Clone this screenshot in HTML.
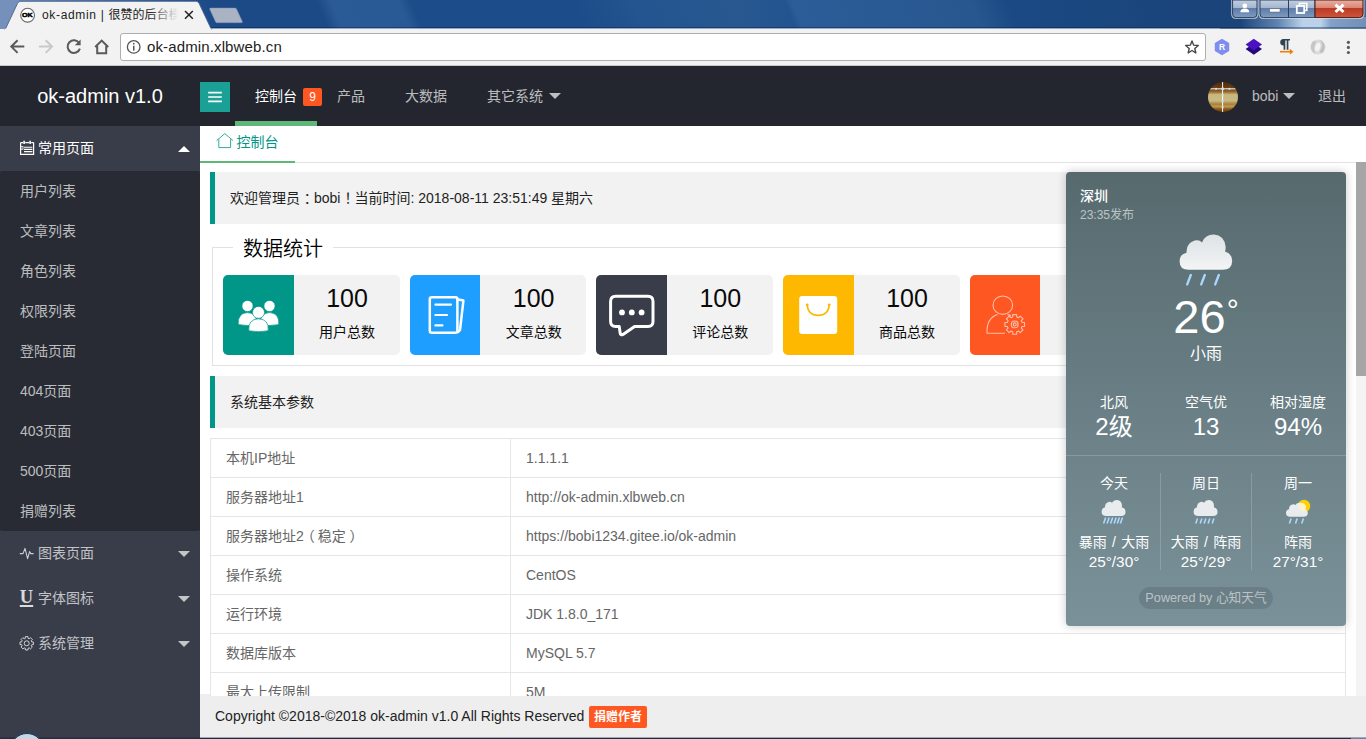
<!DOCTYPE html>
<html lang="zh-CN">
<head>
<meta charset="utf-8">
<title>ok-admin | 很赞的后台模版</title>
<style>
*{box-sizing:border-box;margin:0;padding:0}
html,body{width:1366px;height:739px;overflow:hidden;background:#fff}
body{position:relative;font:14px/1.4 "Liberation Sans","Noto Sans CJK SC",sans-serif;color:#333}
.abs{position:absolute}
/* ---------- browser chrome ---------- */
#titlebar{left:0;top:0;width:1366px;height:29px;background:
 linear-gradient(180deg,rgba(10,30,70,0) 0,rgba(10,30,70,0) 26.5px,rgba(10,30,70,.45) 27.5px,rgba(242,242,242,.55) 28.2px,rgba(242,242,242,.55) 29px),
 linear-gradient(67deg,#7590ba 5.7px,#1b4a87 202.7px,#1b4a87 302.1px,#2b5b96 315.0px,#2a5a95 377.5px,#1c4d8a 388.6px,#1c4c89 535.0px,#245590 594.8px,#28588f 686.8px,#245490 732.9px,#2c5d98 739.3px,#28578f 903.2px,#1b4983 937.2px,#1a447a 1110.3px,#1a447a 1263.1px)}
#toolbar{left:0;top:29px;width:1366px;height:37px;background:#f2f2f2;border-bottom:1px solid #c6c6c6}
#tab{left:6px;top:1px;width:208px;height:28px}
#tabtitle{left:42px;top:7px;width:136px;height:17px;font:12px/17px "Liberation Sans","Noto Sans CJK SC",sans-serif;color:#222;white-space:nowrap;overflow:hidden;letter-spacing:.06px}
#tabfade{left:150px;top:5px;width:28px;height:20px;background:linear-gradient(90deg,rgba(242,242,242,0),#f2f2f2)}
#urlbox{left:120px;top:33px;width:1086px;height:28px;background:#fff;border:1px solid #aeaeae;border-radius:3px}
#url{left:147px;top:37px;font:15px/20px "Liberation Sans",sans-serif;color:#222;white-space:nowrap;letter-spacing:.13px}
/* ---------- page ---------- */
#header{left:0;top:66px;width:1366px;height:60px;background:#23262E}
#logo{left:0;top:66px;width:200px;height:60px;line-height:60px;text-align:center;color:#fff;font-size:20px}
.nav{top:66px;height:60px;line-height:60px;color:rgba(255,255,255,.7);font-size:14px;white-space:nowrap}
.tri{width:0;height:0;border:6px solid transparent}
#side{left:0;top:126px;width:200px;height:613px;background:#393D49}
#sub{left:0;top:171px;width:200px;height:360px;background:#282B33;border-radius:2px}
.sitem{left:20px;height:40px;line-height:40px;color:rgba(255,255,255,.7);font-size:14px;white-space:nowrap}
.pitem{left:38px;height:45px;line-height:45px;color:rgba(255,255,255,.7);font-size:14px;white-space:nowrap}
.quote{left:210px;width:1136px;height:52px;background:#f2f2f2;border-left:5px solid #009688;border-radius:0 2px 2px 0;padding-left:15px;line-height:52px;font-size:14px;color:#222;white-space:nowrap}
.card{top:275px;width:176.67px;height:80px;background:#f2f2f2;border-radius:5px;overflow:hidden}
.card .ic{position:absolute;left:0;top:0;width:70.67px;height:80px}
.card .num{position:absolute;left:71px;top:8px;width:106px;text-align:center;font-size:25px;line-height:30px;color:#0a0a0a}
.card .lab{position:absolute;left:71px;top:47px;width:106px;text-align:center;font-size:14px;line-height:20px;color:#0a0a0a}
.row{left:210px;width:1136px;height:39px;border:1px solid #e6e6e6;border-bottom:none;color:#666;font-size:14px;line-height:38px;white-space:nowrap}
.row .c1{position:absolute;left:0;top:0;width:300px;height:38px;border-right:1px solid #e6e6e6;padding-left:15px}
.row .c2{position:absolute;left:300px;top:0;padding-left:15px}
#footer{left:200px;top:696px;width:1166px;height:43px;background:#eee;line-height:40px;padding-left:15px;font-size:14px;color:#222;white-space:nowrap}
/* weather */
#wx{left:1066px;top:172px;width:280px;height:454px;border-radius:4px;background:linear-gradient(180deg,#566a6e 0,#687d83 46%,#7b9199 100%);box-shadow:0 0 10px rgba(0,0,0,.22);color:#fff}
.wc{position:absolute;text-align:center;white-space:nowrap;transform:translateX(-50%)}
</style>
</head>
<body>
<!-- ======= BROWSER CHROME ======= -->
<div id="titlebar" class="abs"></div>
<div id="toolbar" class="abs"></div>
<svg class="abs" style="left:0;top:0" width="260" height="30" viewBox="0 0 260 30">
  <rect x="0" y="0" width="19" height="29" fill="#7590ba"/>
  <path d="M4.5 31 L17.6 3.2 Q18.6 1.3 20.8 1.3 L195.8 1.3 Q198 1.3 199 3.2 L212.1 31 Z" fill="#f2f2f2" stroke="#4a6590" stroke-width=".9"/>
  <rect x="5" y="28.6" width="206.5" height="2.4" fill="#f2f2f2"/>
  <path d="M210.6 8.1 L235 8.1 Q236 8.1 236.5 9 L242.3 21.6 Q242.7 22.7 241.6 22.7 L217 22.7 Q216 22.7 215.5 21.8 L209.8 9.2 Q209.4 8.1 210.6 8.1Z" fill="#a9b3c3" stroke="#8696b3" stroke-width=".5"/>
  <!-- favicon -->
  <circle cx="27.6" cy="15.2" r="6.9" fill="#fff" stroke="#666" stroke-width="1.1"/>
  <text x="23" y="17.2" transform="translate(27.4 0) scale(1.22 1) translate(-23 0)" font-family="Liberation Sans, sans-serif" font-size="5.9" font-weight="bold" text-anchor="middle" fill="#000" stroke="#000" stroke-width=".45">OK</text>
  <!-- close x -->
  <path d="M185 11 L192.8 18.8 M192.8 11 L185 18.8" stroke="#222" stroke-width="1.5" fill="none"/>
</svg>
<div id="tabtitle" class="abs"><span style="letter-spacing:.66px">ok-admin | </span>很赞的后台模版</div>
<div id="tabfade" class="abs"></div>
<div id="urlbox" class="abs"></div>
<div id="url" class="abs">ok-admin.xlbweb.cn</div>
<svg class="abs" style="left:0;top:29px" width="1366" height="37" viewBox="0 29 1366 37">
  <!-- back -->
  <path d="M24.3 46.6 L11.6 46.6 M17.6 40.3 L11.3 46.6 L17.6 52.9" stroke="#5a5a5a" stroke-width="2" fill="none"/>
  <!-- forward (disabled) -->
  <path d="M39 46.6 L51.7 46.6 M45.7 40.3 L52 46.6 L45.7 52.9" stroke="#c9c9c9" stroke-width="2" fill="none"/>
  <!-- reload -->
  <path d="M79.2 43.2 A6.3 6.3 0 1 0 79.9 48.6" stroke="#5a5a5a" stroke-width="2" fill="none"/>
  <path d="M80.6 39.4 L80.6 45.2 L74.8 45.2 Z" fill="#5a5a5a"/>
  <!-- home -->
  <path d="M95.2 47 L101.7 40.6 L108.2 47 M97.2 46 L97.2 53.2 L106.2 53.2 L106.2 46" stroke="#5a5a5a" stroke-width="2" fill="none" stroke-linejoin="miter"/>
  <!-- info -->
  <circle cx="133.7" cy="46.9" r="6.3" fill="none" stroke="#555" stroke-width="1.3"/>
  <rect x="133" y="45.8" width="1.5" height="4.8" fill="#555"/><rect x="133" y="42.9" width="1.5" height="1.6" fill="#555"/>
  <!-- star -->
  <path transform="translate(1192 47.3) scale(.9) translate(-1192 -47.3)" d="M1192 40.2 L1193.9 44.9 L1199 45.3 L1195.1 48.6 L1196.3 53.6 L1192 50.9 L1187.7 53.6 L1188.9 48.6 L1185 45.3 L1190.1 44.9 Z" fill="none" stroke="#444" stroke-width="1.5" stroke-linejoin="round"/>
  <!-- ext R hex -->
  <path d="M1222 38.8 L1229.2 42.9 L1229.2 51.1 L1222 55.2 L1214.8 51.1 L1214.8 42.9 Z" fill="#7f8cf0"/>
  <text x="1222" y="50.2" font-family="Liberation Sans, sans-serif" font-size="8.5" font-weight="bold" text-anchor="middle" fill="#fff">R</text>
  <!-- layers -->
  <path d="M1253.8 43.4 L1262 49 L1253.8 54.8 L1245.6 49 Z" fill="#23087a"/>
  <path d="M1253.8 38.8 L1262 44.6 L1253.8 50.5 L1245.6 44.6 Z" fill="#4a12c0"/>
  <!-- pilcrow -->
  <path d="M1283.4 38.9 H1290 V40.4 H1288.4 V49.7 H1286.7 V40.4 H1285.3 V49.7 H1283.6 V45.5 A3.3 3.3 0 0 1 1283.4 38.9 Z" fill="#2f4452"/>
  <path d="M1280 51.7 L1290.4 51.7" stroke="#f57c00" stroke-width="1.6" fill="none"/><path d="M1289.8 48.7 L1293.4 51.7 L1289.8 54.8 Z" fill="#f57c00"/>
  <!-- grey swirl ext -->
  <defs><filter id="bl" x="-20%" y="-20%" width="140%" height="140%"><feGaussianBlur stdDeviation=".7"/></filter></defs>
  <g filter="url(#bl)">
    <ellipse cx="1318" cy="47" rx="7.6" ry="7.4" fill="#dadada"/>
    <path d="M1320 39.4 Q1327 44 1323.6 51.6 Q1321.6 54.4 1319.6 51.4 Q1324 45.6 1320 39.4Z" fill="#c0c0c0"/>
    <path d="M1315.6 54.6 Q1308.6 50 1312 42.4 Q1314 39.6 1316.4 42.6 Q1312 48.4 1315.6 54.6Z" fill="#c6c6c6"/>
    <ellipse cx="1317.8" cy="47" rx="2.5" ry="4.3" transform="rotate(14 1317.8 47)" fill="#f3f3f3"/>
  </g>
  <!-- menu dots -->
  <circle cx="1348.4" cy="42.3" r="1.6" fill="#5a5a5a"/><circle cx="1348.4" cy="47.4" r="1.6" fill="#5a5a5a"/><circle cx="1348.4" cy="52.5" r="1.6" fill="#5a5a5a"/>
</svg>
<svg class="abs" style="left:1220px;top:0" width="146" height="29" viewBox="1220 0 146 29">
  <defs>
    <linearGradient id="gb" x1="0" y1="0" x2="0" y2="1"><stop offset="0" stop-color="#c3cfe0"/><stop offset=".45" stop-color="#a3b5cf"/><stop offset=".46" stop-color="#5d7ba6"/><stop offset="1" stop-color="#7f9bc0"/></linearGradient>
    <linearGradient id="gr" x1="0" y1="0" x2="0" y2="1"><stop offset="0" stop-color="#e9b0a4"/><stop offset=".45" stop-color="#d98573"/><stop offset=".46" stop-color="#b83a23"/><stop offset="1" stop-color="#d0553a"/></linearGradient>
    <linearGradient id="glow" x1="0" y1="0" x2="1" y2="0"><stop offset="0" stop-color="#9fc0e6" stop-opacity="0"/><stop offset=".3" stop-color="#a9c6e8" stop-opacity=".45"/><stop offset=".5" stop-color="#cfe3f8" stop-opacity="1"/><stop offset=".64" stop-color="#cfe3f8" stop-opacity="1"/><stop offset=".72" stop-color="#a9c3e2" stop-opacity=".75"/><stop offset="1" stop-color="#9db6d6" stop-opacity=".65"/></linearGradient>
  </defs>
  <rect x="1240" y="0" width="126" height="29" fill="url(#glow)" opacity=".45"/>
  <rect x="1240" y="17" width="126" height="12" fill="url(#glow)" opacity=".8"/>
  <rect x="1220" y="27.4" width="146" height="1.2" fill="#17355f" opacity=".75"/>
  <g fill="none" stroke="rgba(255,255,255,.6)" stroke-width="3">
  <path d="M1232.6 -1 L1257 -1 L1257 14 Q1257 17.6 1253.4 17.6 L1236.2 17.6 Q1232.6 17.6 1232.6 14 Z"/>
  <path d="M1260 -1 L1363 -1 L1363 14 Q1363 17.6 1359.4 17.6 L1263.6 17.6 Q1260 17.6 1260 14 Z"/></g>
  <path d="M1232.6 0 L1257 0 L1257 14 Q1257 17.6 1253.4 17.6 L1236.2 17.6 Q1232.6 17.6 1232.6 14 Z" fill="url(#gb)" stroke="#2b3f60" stroke-width="1"/>
  <path d="M1260 0 L1315 0 L1315 17.6 L1263.6 17.6 Q1260 17.6 1260 14 Z" fill="url(#gb)" stroke="#2b3f60" stroke-width="1"/>
  <path d="M1315 0 L1363 0 L1363 14 Q1363 17.6 1359.4 17.6 L1315 17.6 Z" fill="url(#gr)" stroke="#4a1a14" stroke-width="1"/>
  <path d="M1288.5 0 L1288.5 17.6" stroke="#2b3f60" stroke-width="1"/>
  <!-- user -->
  <circle cx="1244.8" cy="5.8" r="2.4" fill="#fff"/><path d="M1240.4 12.2 Q1240.4 8.6 1244.8 8.6 Q1249.2 8.6 1249.2 12.2 Z" fill="#fff"/>
  <!-- min -->
  <rect x="1269.6" y="8.8" width="10.4" height="3.2" fill="#fff" stroke="#5a5f6a" stroke-width=".5"/>
  <!-- max -->
  <rect x="1299.4" y="3.4" width="7.4" height="7" fill="none" stroke="#fff" stroke-width="1.6"/>
  <rect x="1296.8" y="6" width="7.4" height="7" fill="#6f8bb3" stroke="#fff" stroke-width="1.8"/>
  <!-- close -->
  <path d="M1335.5 4.6 L1343.5 12 M1343.5 4.6 L1335.5 12" stroke="#fff" stroke-width="3" fill="none"/>
</svg>

<!-- ======= PAGE ======= -->
<div id="header" class="abs"></div>
<div id="logo" class="abs">ok-admin v1.0</div>
<div class="abs" style="left:200px;top:82px;width:30px;height:30px;background:#1AA094"></div>
<svg class="abs" style="left:200px;top:82px" width="30" height="30" viewBox="0 0 30 30"><path d="M8.2 10.6 H21.8 M8.2 15 H21.8 M8.2 19.4 H21.8" stroke="#fff" stroke-width="1.7" fill="none"/></svg>
<div class="abs" style="left:235px;top:121px;width:82px;height:5px;background:#5FB878"></div>
<div class="abs nav" style="left:255px;color:#fff">控制台</div>
<div class="abs" style="left:303px;top:88px;width:19px;height:18px;background:#FF5722;border-radius:2px;color:#fff;font-size:12px;line-height:18px;text-align:center">9</div>
<div class="abs nav" style="left:337px">产品</div>
<div class="abs nav" style="left:405px">大数据</div>
<div class="abs nav" style="left:487px">其它系统</div>
<div class="abs tri" style="left:549px;top:93px;border-top-color:rgba(255,255,255,.7)"></div>
<!-- avatar -->
<svg class="abs" style="left:1208px;top:82px" width="30" height="30" viewBox="0 0 30 30">
  <defs><clipPath id="av"><circle cx="15" cy="15" r="15"/></clipPath>
  <linearGradient id="avg" x1="0" y1="0" x2="0" y2="1"><stop offset="0" stop-color="#4a2a0e"/><stop offset=".2" stop-color="#6b3c12"/><stop offset=".33" stop-color="#9a6a2a"/><stop offset=".42" stop-color="#c8b87e"/><stop offset=".62" stop-color="#c9ba84"/><stop offset=".74" stop-color="#a8813a"/><stop offset=".82" stop-color="#c19a4c"/><stop offset=".9" stop-color="#8a571a"/><stop offset="1" stop-color="#6a3c10"/></linearGradient></defs>
  <g clip-path="url(#av)"><rect width="30" height="30" fill="url(#avg)"/>
  <path d="M14.6 0 V30 M0 6.8 H30" stroke="#fff" stroke-width="1" opacity=".95"/>
  <circle cx="14.6" cy="6.8" r="1.5" fill="#bfe6f5"/><circle cx="8" cy="6.8" r="1.1" fill="#bfe6f5"/><circle cx="21.4" cy="6.8" r="1.1" fill="#bfe6f5"/><circle cx="14.6" cy="13" r="1.1" fill="#bfe6f5"/><circle cx="14.6" cy="19.2" r="1.1" fill="#bfe6f5"/><circle cx="14.6" cy="25.4" r="1.1" fill="#bfe6f5"/></g>
</svg>
<div class="abs nav" style="left:1252px">bobi</div>
<div class="abs tri" style="left:1283px;top:93px;border-top-color:rgba(255,255,255,.7)"></div>
<div class="abs nav" style="left:1318px">退出</div>
<div id="side" class="abs"></div>
<div id="sub" class="abs"></div>
<div class="abs pitem" style="top:126px;color:#fff">常用页面</div>
<div class="abs tri" style="left:178px;top:140px;border-bottom-color:#fff"></div>
<div class="abs sitem" style="top:171px">用户列表</div>
<div class="abs sitem" style="top:211px">文章列表</div>
<div class="abs sitem" style="top:251px">角色列表</div>
<div class="abs sitem" style="top:291px">权限列表</div>
<div class="abs sitem" style="top:331px">登陆页面</div>
<div class="abs sitem" style="top:371px">404页面</div>
<div class="abs sitem" style="top:411px">403页面</div>
<div class="abs sitem" style="top:451px">500页面</div>
<div class="abs sitem" style="top:491px">捐赠列表</div>
<div class="abs pitem" style="top:531px">图表页面</div>
<div class="abs tri" style="left:178px;top:551px;border-top-color:rgba(255,255,255,.7)"></div>
<div class="abs pitem" style="top:576px">字体图标</div>
<div class="abs tri" style="left:178px;top:596px;border-top-color:rgba(255,255,255,.7)"></div>
<div class="abs pitem" style="top:621px">系统管理</div>
<div class="abs tri" style="left:178px;top:641px;border-top-color:rgba(255,255,255,.7)"></div>
<svg class="abs" style="left:0;top:126px" width="40" height="560" viewBox="0 126 40 560">
  <!-- notebook icon -->
  <g stroke="#fff" fill="none" stroke-width="1.2">
    <path d="M20.6 142.6 V154.4 H33.6 V142.6"/>
    <path d="M20.6 142.6 H23 M25.2 142.6 H29 M31.2 142.6 H33.6"/>
    <path d="M24.1 140.8 V144 M30.1 140.8 V144" stroke-width="1.6"/>
    <path d="M24 147.2 H32.4 M24 149.4 H32.4 M24 151.6 H32.4" stroke-width="1.1"/>
    <rect x="20.8" y="146.6" width="2.2" height="2.6" stroke-width=".8"/>
  </g>
  <!-- pulse icon -->
  <path d="M19.8 553.6 H23 L25 548.4 L27.6 558.6 L29.6 551.6 L30.6 553.6 H33.6" stroke="rgba(255,255,255,.75)" stroke-width="1.1" fill="none" stroke-linejoin="round"/>
  <!-- gear icon -->
  <g stroke="rgba(255,255,255,.75)" fill="none" stroke-width="1">
    <circle cx="26.7" cy="643.3" r="2.5"/>
    <path d="M25.29 638.30 L25.37 636.63 L28.03 636.63 L28.11 638.30 L29.24 638.76 L30.48 637.65 L32.35 639.52 L31.24 640.76 L31.70 641.89 L33.37 641.97 L33.37 644.63 L31.70 644.71 L31.24 645.84 L32.35 647.08 L30.48 648.95 L29.24 647.84 L28.11 648.30 L28.03 649.97 L25.37 649.97 L25.29 648.30 L24.16 647.84 L22.92 648.95 L21.05 647.08 L22.16 645.84 L21.70 644.71 L20.03 644.63 L20.03 641.97 L21.70 641.89 L22.16 640.76 L21.05 639.52 L22.92 637.65 L24.16 638.76Z" stroke-linejoin="round"/>
  </g>
</svg>
<div class="abs" style="left:18.5px;top:587px;width:16px;height:20px;font:bold 18.5px/20px 'Liberation Serif',serif;color:rgba(255,255,255,.82);text-decoration:underline;text-decoration-thickness:1.6px;text-underline-offset:1.5px;text-align:center">U</div>

<!-- tab bar -->
<div class="abs" style="left:200px;top:162px;width:1156px;height:1px;background:#e2e2e2"></div>
<div class="abs" style="left:200px;top:161px;width:95px;height:2px;background:#5FB878"></div>
<svg class="abs" style="left:215px;top:132px" width="20" height="18" viewBox="0 0 20 18"><path d="M1.6 8.6 L9.8 1.6 L18 8.6 M3.8 7.2 V15.6 H15.6 V7.2" stroke="#009688" stroke-width="1" fill="none" stroke-linejoin="round" opacity=".8"/></svg>
<div class="abs" style="left:236.5px;top:132px;height:20px;line-height:20px;font-size:14px;color:#009688;white-space:nowrap">控制台</div>
<!-- scrollbar -->
<div class="abs" style="left:1356px;top:163px;width:10px;height:534px;background:#f4f4f4"></div>
<div class="abs" style="left:1356px;top:162px;width:10px;height:214px;background:#a6a6a6"></div>
<!-- welcome -->
<div class="abs quote" style="top:172px">欢迎管理员<span style="position:relative;left:3.7px">：</span>bobi<span style="position:relative;left:4px">！</span>当前时间: 2018-08-11 23:51:49 星期六</div>
<!-- fieldset -->
<div class="abs" style="left:212px;top:247px;width:1132px;height:119px;border:1px solid #e2e2e2"></div>
<div class="abs" style="left:233px;top:233px;width:100px;height:30px;background:#fff;text-align:center;font-size:20px;line-height:32px;font-weight:350;color:#000;white-space:nowrap">数据统计</div>
<div class="abs card" style="left:223px"><div class="ic" style="background:#009688"><svg width="71" height="80" viewBox="0 0 71 80"><g fill="#fff" stroke="#009688" stroke-width=".7">
<circle cx="24.5" cy="31" r="5.6"/><path d="M15.2 49.6 Q14.4 38.2 24.5 37.6 Q34.6 38.2 33.8 49.6 Q24.5 51.4 15.2 49.6Z"/>
<circle cx="46.5" cy="31" r="5.6"/><path d="M37.2 49.6 Q36.4 38.2 46.5 37.6 Q56.6 38.2 55.8 49.6 Q46.5 51.4 37.2 49.6Z"/>
<circle cx="35.5" cy="37.4" r="6"/><path d="M25.8 55.8 Q24.8 44.2 35.5 43.8 Q46.2 44.2 45.2 55.8 Q35.5 57.6 25.8 55.8Z"/></g></svg></div><div class="num">100</div><div class="lab">用户总数</div></div>
<div class="abs card" style="left:409.67px"><div class="ic" style="background:#1E9FFF"><svg width="71" height="80" viewBox="0 0 71 80"><g stroke="#fff" fill="none" stroke-width="2.5" stroke-linejoin="round" stroke-linecap="round">
<path d="M48.4 24.6 L53.4 25.6 L50 55 L48.2 57"/>
<rect x="19.8" y="22.2" width="27.6" height="35.6" rx="2" fill="#1E9FFF"/>
<path d="M25.4 29.6 H41 M25.4 40 H37 M25.4 50.4 H32.4" stroke-width="2.2"/></g></svg></div><div class="num">100</div><div class="lab">文章总数</div></div>
<div class="abs card" style="left:596.33px"><div class="ic" style="background:#393D49"><svg width="71" height="80" viewBox="0 0 71 80"><path d="M19.6 21.2 H52 Q57 21.2 57 26.2 V46.4 Q57 51.4 52 51.4 H38.6 L27 59.4 Q24.6 60.6 24.2 58.2 L23.2 51.4 H19.6 Q14.6 51.4 14.6 46.4 V26.2 Q14.6 21.2 19.6 21.2Z" stroke="#fff" stroke-width="3" fill="none" stroke-linejoin="round"/>
<circle cx="26" cy="37.4" r="2.9" fill="#fff"/><circle cx="35.8" cy="37.4" r="2.9" fill="#fff"/><circle cx="45.6" cy="37.4" r="2.9" fill="#fff"/></svg></div><div class="num">100</div><div class="lab">评论总数</div></div>
<div class="abs card" style="left:783px"><div class="ic" style="background:#FFB800"><svg width="71" height="80" viewBox="0 0 71 80"><rect x="16.2" y="21" width="38" height="38" rx="3" fill="#fff"/>
<path d="M24.2 30 Q25 40.4 35.2 40.4 Q45.4 40.4 46.2 30" stroke="#FFB800" stroke-width="1.6" fill="none" stroke-linecap="round"/><circle cx="24.2" cy="29.8" r="1.4" fill="#FFB800"/><circle cx="46.2" cy="29.8" r="1.4" fill="#FFB800"/></svg></div><div class="num">100</div><div class="lab">商品总数</div></div>
<div class="abs card" style="left:969.67px"><div class="ic" style="background:#FF5722"><svg width="71" height="80" viewBox="0 0 71 80"><g stroke="#ffc0ad" fill="none" stroke-width="1.1" stroke-linejoin="round">
<ellipse cx="32.8" cy="30.2" rx="9.8" ry="9.2"/><path d="M35 58.2 H17 Q16.4 43.2 27.6 39.6 M37.6 39.4 Q39.6 40 41 40.8"/>
<circle cx="44.7" cy="49.4" r="3.4"/><circle cx="44.7" cy="49.4" r="1.5"/>
<path d="M42.64 42.09 L42.75 39.59 L46.65 39.59 L46.76 42.09 L48.41 42.77 L50.26 41.09 L53.01 43.84 L51.33 45.69 L52.01 47.34 L54.51 47.45 L54.51 51.35 L52.01 51.46 L51.33 53.11 L53.01 54.96 L50.26 57.71 L48.41 56.03 L46.76 56.71 L46.65 59.21 L42.75 59.21 L42.64 56.71 L40.99 56.03 L39.14 57.71 L36.39 54.96 L38.07 53.11 L37.39 51.46 L34.89 51.35 L34.89 47.45 L37.39 47.34 L38.07 45.69 L36.39 43.84 L39.14 41.09 L40.99 42.77Z"/></g></svg></div><div class="num">100</div><div class="lab">管理员数</div></div>

<div class="abs quote" style="top:376px">系统基本参数</div>
<div class="abs row" style="top:438px"><div class="c1">本机IP地址</div><div class="c2">1.1.1.1</div></div>
<div class="abs row" style="top:477px"><div class="c1">服务器地址1</div><div class="c2">http://ok-admin.xlbweb.cn</div></div>
<div class="abs row" style="top:516px"><div class="c1">服务器地址2<span style="position:relative;left:-3px">（</span>稳定<span style="position:relative;left:3.6px">）</span></div><div class="c2">https://bobi1234.gitee.io/ok-admin</div></div>
<div class="abs row" style="top:555px"><div class="c1">操作系统</div><div class="c2">CentOS</div></div>
<div class="abs row" style="top:594px"><div class="c1">运行环境</div><div class="c2">JDK 1.8.0_171</div></div>
<div class="abs row" style="top:633px"><div class="c1">数据库版本</div><div class="c2">MySQL 5.7</div></div>
<div class="abs row" style="top:672px"><div class="c1">最大上传限制</div><div class="c2">5M</div></div>


<div id="wx" class="abs">
  <div style="position:absolute;left:14px;top:14px;font-size:14px;line-height:20px;font-weight:500;white-space:nowrap">深圳</div>
  <div style="position:absolute;left:14px;top:34.5px;font-size:12px;line-height:17px;color:rgba(255,255,255,.6);white-space:nowrap">23:35发布</div>
  <!-- big cloud -->
  <svg style="position:absolute;left:110px;top:60px" width="60" height="56" viewBox="0 0 60 56">
    <defs><linearGradient id="cg" x1="0" y1="0" x2="0" y2="1"><stop offset="0" stop-color="#dfe3e5"/><stop offset="1" stop-color="#f2f4f5"/></linearGradient></defs>
    <path d="M12.6 37.8 Q3.6 37.8 3.6 29.4 Q3.6 22 10.6 20.8 Q9.8 11.4 18.6 8.6 Q23.4 7.6 26 10.4 Q29.4 2.4 38 2.6 Q48.2 3.4 49.6 14.6 Q49.8 17.4 49 19.6 Q56.2 21.6 56.2 29 Q56 37.8 46.6 37.8 Z" fill="url(#cg)"/>
    <path d="M14.8 43 L11.2 52.4 M28.8 43 L25.2 52.4 M42.8 43 L39.2 52.4" stroke="#a9d6fb" stroke-width="2.4" stroke-linecap="round"/>
  </svg>
  <div class="wc" style="left:139.5px;top:115px;font-size:47px;line-height:60px;">26<span style="font-size:30px;position:relative;top:-13px;left:1px">°</span></div>
  <div class="wc" style="left:140px;top:171px;font-size:16px;line-height:22px">小雨</div>
  <div class="wc" style="left:48px;top:220px;font-size:14px;line-height:20px">北风</div>
  <div class="wc" style="left:140px;top:220px;font-size:14px;line-height:20px">空气优</div>
  <div class="wc" style="left:232px;top:220px;font-size:14px;line-height:20px">相对湿度</div>
  <div class="wc" style="left:48px;top:239px;font-size:24px;line-height:32px">2级</div>
  <div class="wc" style="left:140px;top:239px;font-size:24px;line-height:32px">13</div>
  <div class="wc" style="left:232px;top:239px;font-size:24px;line-height:32px">94%</div>
  <div style="position:absolute;left:0;top:283px;width:280px;height:1px;background:rgba(255,255,255,.18)"></div>
  <div style="position:absolute;left:94px;top:301px;width:1px;height:97px;background:rgba(255,255,255,.18)"></div>
  <div style="position:absolute;left:185px;top:301px;width:1px;height:97px;background:rgba(255,255,255,.18)"></div>
  <div class="wc" style="left:48px;top:301px;font-size:14px;line-height:20px">今天</div>
  <div class="wc" style="left:140px;top:301px;font-size:14px;line-height:20px">周日</div>
  <div class="wc" style="left:232px;top:301px;font-size:14px;line-height:20px">周一</div>
  <!-- small icons -->
  <svg style="position:absolute;left:34px;top:327px" width="28" height="26" viewBox="0 0 28 26">
    <path transform="translate(0 .14) scale(1 1.08)" d="M6.4 15.6 Q1.6 15.6 1.6 11.6 Q1.6 8.2 5 7.6 Q4.8 3.6 8.6 2.6 Q10.8 2.2 12 3.4 Q13.6 0.6 17 0.8 Q21.6 1.2 22 6 Q22 7 21.8 7.6 Q25.6 8.4 25.6 11.8 Q25.4 15.6 21.2 15.6 Z" fill="#e9ecee"/>
    <path d="M5.7 18.4 L3.6 24.4 M9.2 18.4 L7.1 24.4 M12.7 18.4 L10.6 24.4 M16.2 18.4 L14.1 24.4 M19.4 18.4 L17.3 24.4 M22.5 18.4 L20.4 24.4" stroke="#acd8ff" stroke-width="1.6"/>
  </svg>
  <svg style="position:absolute;left:126px;top:327px" width="28" height="26" viewBox="0 0 28 26">
    <path transform="translate(0 .14) scale(1 1.08)" d="M6.4 15.6 Q1.6 15.6 1.6 11.6 Q1.6 8.2 5 7.6 Q4.8 3.6 8.6 2.6 Q10.8 2.2 12 3.4 Q13.6 0.6 17 0.8 Q21.6 1.2 22 6 Q22 7 21.8 7.6 Q25.6 8.4 25.6 11.8 Q25.4 15.6 21.2 15.6 Z" fill="#e9ecee"/>
    <path d="M5.5 19.6 L3.8 24.5 M9.9 19.6 L8.2 24.5 M13.8 19.6 L12.1 24.5 M17.8 19.6 L16.1 24.5 M21.9 19.6 L20.2 24.5" stroke="#acd8ff" stroke-width="1.6"/>
  </svg>
  <svg style="position:absolute;left:218px;top:327px" width="28" height="26" viewBox="0 0 28 26">
    <circle cx="20" cy="7" r="6.2" fill="#ffd000"/>
    <path transform="translate(.37 .4) scale(1.02 1.06)" d="M5.8 16.4 Q1.6 16.4 1.6 12.8 Q1.6 9.8 4.6 9.2 Q4.4 5.6 7.8 4.8 Q9.8 4.4 10.8 5.4 Q12.2 3 15.4 3.2 Q19.4 3.6 19.8 7.8 Q19.8 8.6 19.6 9.2 Q23 9.8 23 12.8 Q22.8 16.4 19 16.4 Z" fill="#e9ecee"/>
    <path d="M14.2 5.6 Q17 2.8 20 4.4 Q23.2 7 21.6 10.6 Q21 12 19.8 12.4 Q14 11 14.2 5.6Z" fill="#fff3c8" opacity=".92"/>
    <path d="M7.1 19.4 L5.4 24.5 M13.2 19.4 L11.5 24.5 M19.4 19.4 L17.7 24.5" stroke="#acd8ff" stroke-width="1.6"/>
  </svg>
  <div class="wc" style="left:48px;top:360px;font-size:14px;line-height:21px;word-spacing:1.5px">暴雨 / 大雨</div>
  <div class="wc" style="left:140px;top:360px;font-size:14px;line-height:21px;word-spacing:1.5px">大雨 / 阵雨</div>
  <div class="wc" style="left:232px;top:360px;font-size:14px;line-height:21px;word-spacing:1.5px">阵雨</div>
  <div class="wc" style="left:48px;top:378.5px;font-size:15.3px;line-height:22px">25°/30°</div>
  <div class="wc" style="left:140px;top:378.5px;font-size:15.3px;line-height:22px">25°/29°</div>
  <div class="wc" style="left:232px;top:378.5px;font-size:15.3px;line-height:22px">27°/31°</div>
  <div style="position:absolute;left:73px;top:415px;width:134px;height:22px;border-radius:11px;background:rgba(60,75,80,.22);text-align:center;font-size:12.7px;line-height:22px;color:rgba(255,255,255,.55);white-space:nowrap">Powered by 心知天气</div>
</div>
<div id="footer" class="abs">Copyright ©2018-©2018 ok-admin v1.0 All Rights Reserved</div>
<div class="abs" style="left:589px;top:706px;width:58px;height:22px;background:#FF5722;border-radius:2px;color:#fff;font-size:12px;font-weight:bold;line-height:22px;text-align:center;white-space:nowrap">捐赠作者</div>
<div class="abs" style="left:200px;top:694px;width:10px;height:3px;background:#eee"></div>
<div class="abs" style="left:0;top:737px;width:1366px;height:2px;background:linear-gradient(180deg,rgba(20,40,60,.35) 0,rgba(20,40,60,.35) 50%,#1c2f45 50%,#1c2f45 100%)"></div>
<div class="abs" style="left:1351px;top:738px;width:15px;height:1px;background:#6283ab"></div>
<div class="abs" style="left:10px;top:733px;width:34px;height:34px;border-radius:50%;background:#c9d6e2;border:1px solid #0d3b6b"></div>
</body>
</html>
